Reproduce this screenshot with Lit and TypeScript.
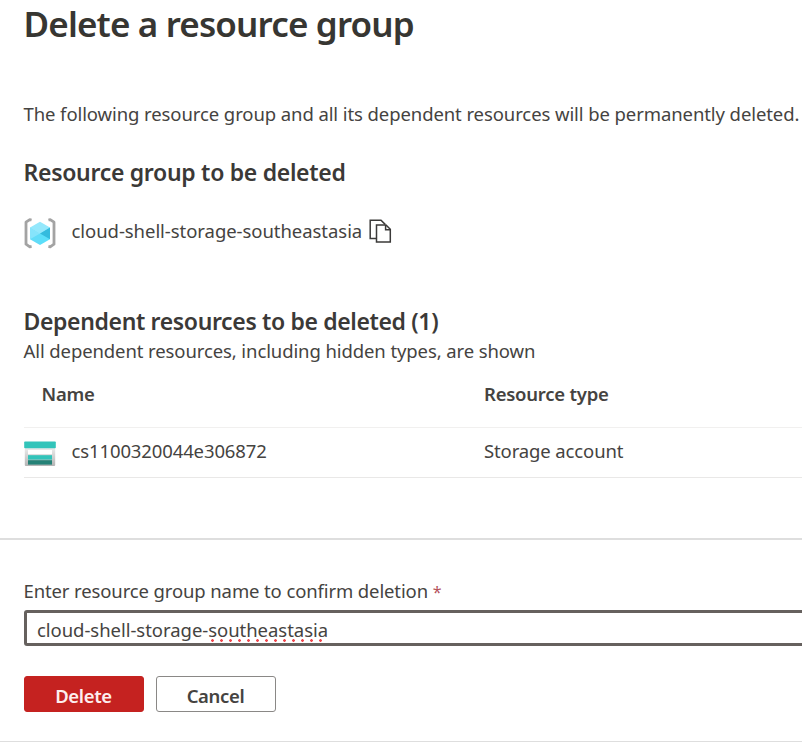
import { LitElement, html, css, svg } from "lit";
import { customElement, property } from "lit/decorators.js";

const groupIcon = svg`
  <svg width="32" height="32" viewBox="0 0 32 32" fill="none">
    <path d="M7.6 3L5.8 2.6L2 5.2V27.2L5.8 29.8L7.6 29.4" stroke="#a3a3a3" stroke-width="2.8" stroke-linejoin="round" />
    <path d="M24.4 3L26.2 2.6L30 5.2V27.2L26.2 29.8L24.4 29.4" stroke="#a3a3a3" stroke-width="2.8" stroke-linejoin="round" />
    <path d="M16 4.8L26 10.6L16 16.4L6 10.6Z" fill="#94e8fc" />
    <path d="M6 10.6L16 16.4V28L6 22.2Z" fill="#62dcf8" />
    <path d="M26 10.6L16 16.4V28L26 22.2Z" fill="#5bdffa" />
    <path d="M26 10.6L16 16.4L26 22.2Z" fill="#34bbde" />
    <path d="M6 10.6L16 16.4L6 22.2Z" fill="#86e4fb" />
  </svg>`;

const copyIcon = svg`
  <svg width="23" height="25" viewBox="0 0 23 25" fill="none" stroke="#3b3a39" stroke-width="1.5">
    <path d="M7.5 19.5H1.2V1.2H12L16.2 5.4" />
    <path d="M7.5 6H17L21.3 10.3V23H7.5Z" />
    <path d="M16.6 6V10.7H21.3" />
  </svg>`;

const storageIcon = svg`
  <svg width="32" height="26" viewBox="0 0 32 26">
    <defs>
      <linearGradient id="case" x1="0" y1="0" x2="0" y2="1">
        <stop offset="0" stop-color="#efefef" />
        <stop offset="1" stop-color="#b4b4b4" />
      </linearGradient>
    </defs>
    <rect x="0.8" y="6" width="30.4" height="19" rx="1" fill="url(#case)" />
    <rect x="0.2" y="0.4" width="31.6" height="6.8" rx="0.8" fill="#32c4ba" />
    <rect x="4" y="9" width="24" height="4.2" fill="#fff" />
    <rect x="4" y="14.2" width="24" height="4.4" fill="#32c4ba" />
    <rect x="4" y="19.2" width="24" height="4.4" fill="#258277" />
  </svg>`;

@customElement("app-root")
export class AppRoot extends LitElement {
  @property() groupName = "cloud-shell-storage-southeastasia";

  static styles = css`
    :host {
      display: block;
      width: 802px;
      height: 742px;
      overflow: hidden;
      box-sizing: border-box;
      background: #fff;
      color: #454341;
      font-family: "Noto Sans", "Open Sans", sans-serif;
      font-size: 18.5px;
      line-height: 26px;
      white-space: nowrap;
    }
    .panel { display: flex; flex-direction: column; height: 742px; }
    .content { box-sizing: border-box; height: 538px; padding: 1px 0 0 23.5px; }
    h1, h2, p { margin: 0; font-weight: 400; }
    h1 { font-size: 35px; line-height: 46px; font-weight: 600; color: #373632; letter-spacing: -0.85px; }
    .intro { margin-top: 54px; letter-spacing: -0.09px; }
    h2 { font-size: 23px; line-height: 32px; font-weight: 600; color: #3b3937; letter-spacing: -0.3px; }
    .group-title { margin-top: 29px; }
    .group { display: flex; align-items: center; height: 36px; margin-top: 25px; }
    .group .label { margin-left: 16px; letter-spacing: -0.05px; }
    svg { display: block; flex: none; }
    .group .kind { margin-top: 4px; }
    .copy { margin-left: 7px; }
    .dep-title { margin-top: 56px; letter-spacing: -0.36px; }
    .sub { margin-top: 1px; letter-spacing: -0.1px; }
    .row { display: grid; grid-template-columns: 460.5px 1fr; align-items: center; box-sizing: border-box; }
    .head { height: 64px; padding-bottom: 4px; font-weight: 600; letter-spacing: -0.24px; border-bottom: 1px solid #f1f0ef; }
    .head .name { padding-left: 18px; }
    .item { height: 50px; padding-bottom: 3px; border-bottom: 1px solid #e9e8e7; letter-spacing: -0.12px; }
    .resource { display: flex; align-items: center; }
    .resource svg { margin: 5px 16px 0 0; }
    .footer { box-sizing: border-box; flex: 1; border-top: 2px solid #dedede; border-bottom: 1px solid #dedede; padding: 38px 0 0 23.5px; }
    .confirm { letter-spacing: -0.12px; }
    .star { color: #b5525c; font-size: 16px; line-height: 20px; }
    .field {
      box-sizing: border-box; height: 36px; width: 800px; margin-top: 6px; padding: 2px 10.5px 0;
      border: 3px solid #66615e; border-radius: 3px; line-height: 30px; letter-spacing: -0.04px;
    }
    .typo {
      background: radial-gradient(circle, #f0474d 1.1px, transparent 1.6px) 0 100% / 9px 3px repeat-x;
    }
    .buttons { display: flex; gap: 12px; margin-top: 30px; }
    button {
      box-sizing: border-box; width: 120px; height: 36px; padding: 3px 0 0; border: 1.5px solid #8a8886;
      border-radius: 3px; background: #fff; color: #454341; font: 600 18.5px/30px "Noto Sans", sans-serif;
      letter-spacing: -0.35px;
    }
    .danger { background: #c52220; border-color: #c52220; color: #fdeeee; }
  `;

  render() {
    const cut = this.groupName.lastIndexOf("-") + 1;
    return html`
      <div class="panel">
        <div class="content">
          <h1><span>Delete a resource group</span></h1>
          <p class="intro">The following resource group and all its dependent resources will be permanently deleted.</p>
          <h2 class="group-title">Resource group to be deleted</h2>
          <div class="group">
            <span class="kind">${groupIcon}</span>
            <span class="label">${this.groupName}</span>
            <span class="copy">${copyIcon}</span>
          </div>
          <h2 class="dep-title">Dependent resources to be deleted (1)</h2>
          <p class="sub">All dependent resources, including hidden types, are shown</p>
          <div class="row head"><span class="name">Name</span><span class="type">Resource type</span></div>
          <div class="row item">
            <span class="resource">${storageIcon}<span class="id">cs1100320044e306872</span></span>
            <span class="kind-name">Storage account</span>
          </div>
        </div>
        <div class="footer">
          <div class="confirm">Enter resource group name to confirm deletion <span class="star">*</span></div>
          <div class="field">${this.groupName.slice(0, cut)}<span class="typo">${this.groupName.slice(cut)}</span></div>
          <div class="buttons">
            <button class="danger">Delete</button>
            <button class="plain">Cancel</button>
          </div>
        </div>
      </div>
    `;
  }
}
